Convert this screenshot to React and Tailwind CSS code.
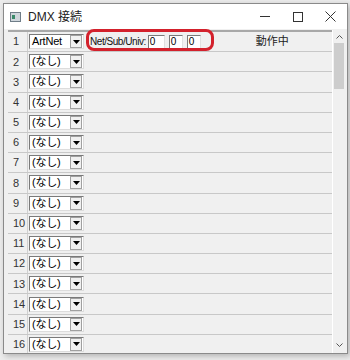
const font = "font-['Liberation_Sans','Noto_Sans_CJK_JP',sans-serif]";

const Select = ({ value }) => (
  <div className="flex items-center h-[15px] w-[55px] bg-white border border-t-[#7a7a7a] border-l-[#7a7a7a] border-r-[#dcdcdc] border-b-[#dcdcdc]">
    <span className="flex-1 pl-[2px] text-[11px] leading-none text-black tracking-[-0.2px]">{value}</span>
    <div className="w-[12px] h-[13px] mr-[1px] bg-[#f0f0f0] border border-[#a0a0a0] flex items-center justify-center">
      <svg width="7" height="4" viewBox="0 0 7 4">
        <path d="M0 0h7L3.5 4z" fill="#000" />
      </svg>
    </div>
  </div>
);

const NumBox = ({ w }) => (
  <div className={`h-[14px] ${w} bg-white border border-t-[#7a7a7a] border-l-[#7a7a7a] border-r-[#e0e0e0] border-b-[#e0e0e0] text-[10px] leading-[12px] pl-[1px]`}>
    0
  </div>
);

const Row = ({ n, first }) => (
  <div className="flex items-center h-[20.2px] border-b border-[#c8c8c8] shrink-0">
    <div className="w-[20px] h-full flex items-center pl-[5px] text-[11px] text-[#333] border-r border-[#d0d0d0]">
      {n}
    </div>
    <div className="pl-[1px]">
      <Select value={first ? "ArtNet" : "(なし)"} />
    </div>
    {first && (
      <>
        <span className="ml-[6px] text-[10px] tracking-[-0.45px] text-[#111]">Net/Sub/Univ:</span>
        <div className="ml-[2px] flex gap-[4px]">
          <NumBox w="w-[17px]" />
          <NumBox w="w-[14px]" />
          <NumBox w="w-[14px]" />
        </div>
        <span className="ml-[55px] text-[11px] text-[#222]">動作中</span>
      </>
    )}
  </div>
);

export default function App() {
  const rows = Array.from({ length: 16 }, (_, i) => i + 1);

  return (
    <div className={`w-[350px] h-[360px] bg-[#ececec] overflow-hidden relative ${font}`}>
      <div className="ml-[3px] mt-[3px] w-[345px] h-[351px] bg-[#f0f0f0] border border-[#8a8a8a] flex flex-col shadow-[2px_2px_6px_rgba(0,0,0,0.25)]">
        {/* title bar */}
        <div className="h-[25px] bg-white flex items-center shrink-0">
          <svg className="ml-[6px]" width="11" height="10" viewBox="0 0 11 10">
            <rect x="0.5" y="0.5" width="10" height="9" fill="#cfd6dc" stroke="#6f7d88" />
            <rect x="2" y="3" width="3" height="4" fill="#3a8a6a" />
          </svg>
          <span className="ml-[7px] text-[12px] text-[#222]">DMX 接続</span>
          <div className="ml-auto flex items-center h-full">
            <div className="w-[33px] flex justify-center">
              <div className="w-[10px] h-px bg-[#333]" />
            </div>
            <div className="w-[33px] flex justify-center">
              <div className="w-[10px] h-[10px] border border-[#333]" />
            </div>
            <div className="w-[33px] flex justify-center">
              <svg width="11" height="11" viewBox="0 0 11 11">
                <path d="M0.5 0.5l10 10M10.5 0.5l-10 10" stroke="#333" strokeWidth="1" />
              </svg>
            </div>
          </div>
        </div>

        {/* grid */}
        <div className="flex flex-1 min-h-0 ml-[4px] mt-[1px]">
          <div className="w-[324px] flex flex-col border-t-2 border-[#a8a8a8] overflow-hidden">
            {rows.map((n) => (
              <Row key={n} n={n} first={n === 1} />
            ))}
          </div>
          <div className="w-[13px] flex flex-col bg-[#f0f0f0] border-l border-white">
            <div className="h-[13px] flex items-center justify-center">
              <svg width="7" height="4" viewBox="0 0 7 4">
                <path d="M0.5 3.5l3-3 3 3" stroke="#555" fill="none" />
              </svg>
            </div>
            <div className="h-[46px] mx-[1px] bg-[#cdcdcd]" />
            <div className="flex-1" />
            <div className="h-[13px] flex items-center justify-center mb-[2px]">
              <svg width="7" height="4" viewBox="0 0 7 4">
                <path d="M0.5 0.5l3 3 3-3" stroke="#555" fill="none" />
              </svg>
            </div>
          </div>
        </div>
      </div>

      {/* red annotation */}
      <div className="absolute left-[86px] top-[29px] w-[128px] h-[22px] rounded-[8px] border-[3px] border-[#d3212c]" />
    </div>
  );
}
